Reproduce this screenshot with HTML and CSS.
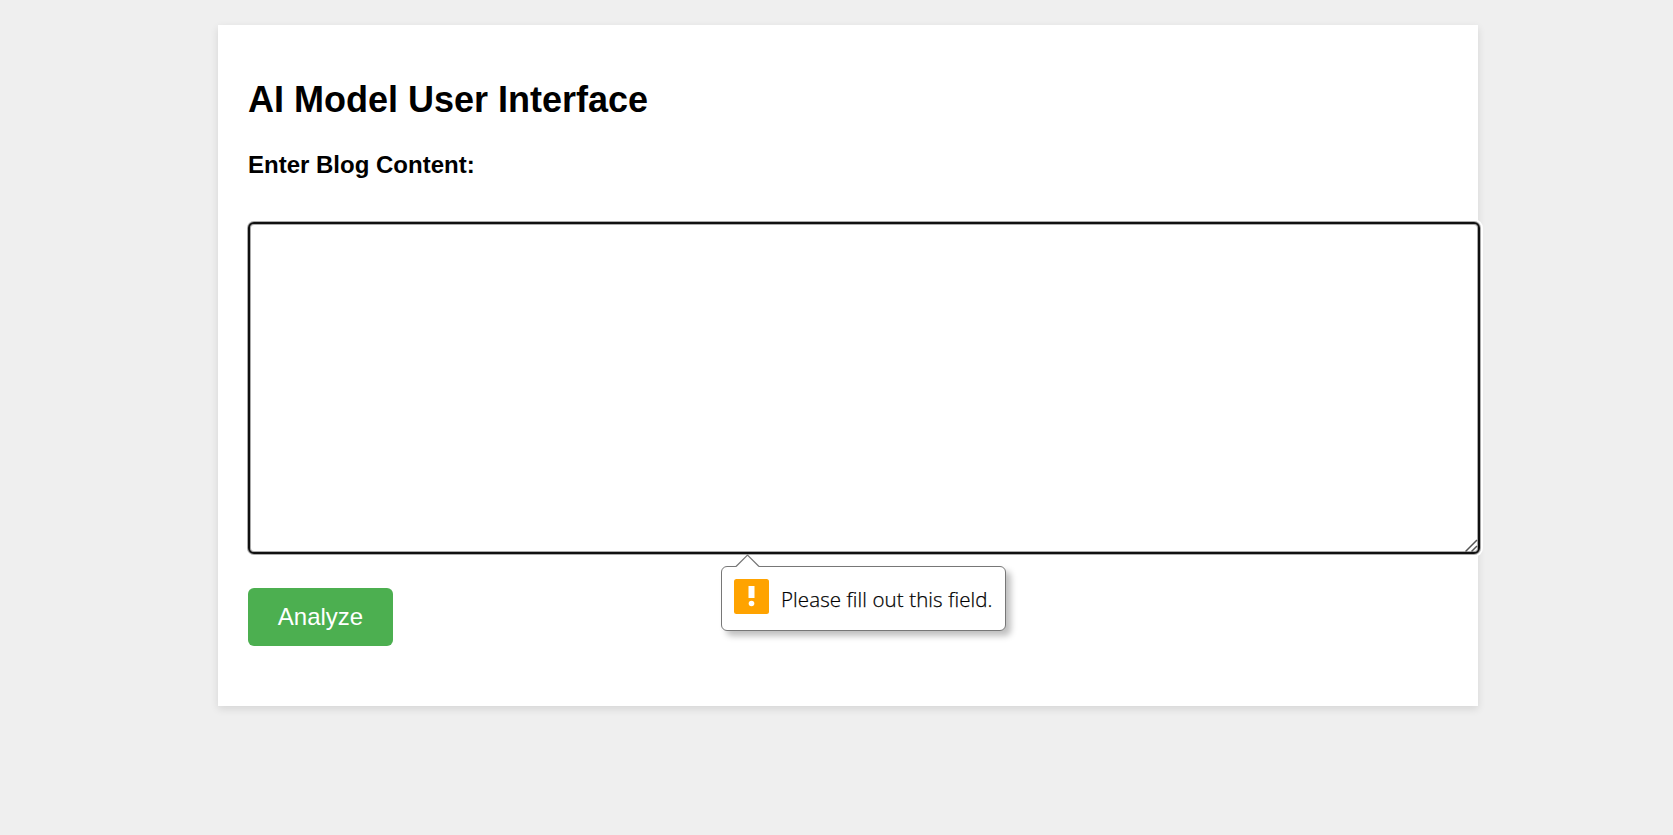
FILE: index.html
```html
<!DOCTYPE html>
<html lang="en">
<head>
<meta charset="utf-8">
<title>AI Model User Interface</title>
<link rel="stylesheet" href="styles.css">
</head>
<body>
<main class="card">
  <h1 class="title">AI Model User Interface</h1>
  <form class="form">
    <label class="label" for="content">Enter Blog Content:</label>
    <div class="field">
      <textarea class="textarea" id="content"></textarea>
      <svg class="grip" width="13" height="13" viewBox="0 0 13 13"><path d="M.5 12.5 12 1M6.5 12.5 12 7" fill="none" stroke="#555" stroke-width="1.5"/></svg>
      <div class="bubble" role="alert">
        <svg class="arrow" width="26" height="13" viewBox="0 0 26 13"><path d="M1 12.5 12.5 1 24 12.5V13H1Z" fill="#fff"/><path d="M1 12.5 12.5 1 24 12.5" fill="none" stroke="#777" stroke-width="1.2"/></svg>
        <svg class="warn" width="35" height="35" viewBox="0 0 35 35"><rect width="35" height="35" rx="2.5" fill="#ffa300"/><path d="M14.5 7h6v12h-6z" fill="#fff"/><circle cx="17.5" cy="24.5" r="2.8" fill="#fff"/></svg>
        <span class="message">Please fill out this field.</span>
      </div>
    </div>
    <button class="button" type="button">Analyze</button>
  </form>
</main>
</body>
</html>
```
FILE: styles.css
```css
body {
  box-sizing: border-box;
  min-height: 835px;
  margin: 0;
  padding: 25px 0 0 218px;
  background: #efefef;
  font-family: "Liberation Sans", Arial, sans-serif;
  color: #000;
}
.card {
  box-sizing: border-box;
  width: 1260px;
  height: 681px;
  padding: 54px 30px 30px;
  background: #fff;
  box-shadow: 0 3px 8px rgba(0, 0, 0, 0.11);
}
.title {
  margin: 0;
  font-size: 36px;
  line-height: 42px;
}
.form {
  display: flex;
  flex-direction: column;
  align-items: flex-start;
}
.label {
  margin-top: 30px;
  font-size: 24px;
  font-weight: bold;
  line-height: 28px;
}
.field {
  position: relative;
  width: 1232px;
  height: 332px;
  margin: 43px 0 34px;
}
.textarea {
  display: block;
  box-sizing: border-box;
  width: 100%;
  height: 100%;
  margin: 0;
  border: 2px solid #101010;
  border-radius: 6px;
  outline: 0;
  resize: none;
  background: #fff;
  box-shadow: inset 0 0 0 1px #aaa, 0 0 0 1px #aaa, 0 0 0 3px #fff;
}
.grip {
  position: absolute;
  right: 2px;
  bottom: 2px;
}
.bubble {
  position: absolute;
  left: 473px;
  top: 344px;
  box-sizing: border-box;
  display: flex;
  align-items: center;
  width: 285px;
  height: 65px;
  padding: 0 12px;
  border: 1px solid #777;
  border-radius: 6px;
  background: #fff;
  box-shadow: 5px 5px 6px rgba(0, 0, 0, 0.25);
}
.arrow {
  position: absolute;
  left: 13px;
  top: -13px;
}
.warn {
  flex: none;
  margin-top: -5px;
}
.message {
  margin-left: 12px;
  font: 300 20.5px/28px "Open Sans", "Noto Sans", sans-serif;
  letter-spacing: 0.1px;
  -webkit-text-stroke: 0.25px #000;
  white-space: nowrap;
}
.button {
  width: 145px;
  height: 58px;
  padding: 0;
  border: 0;
  border-radius: 6px;
  background: #4caf50;
  color: #fff;
  font: 24px/28px "Liberation Sans", Arial, sans-serif;
}
```
